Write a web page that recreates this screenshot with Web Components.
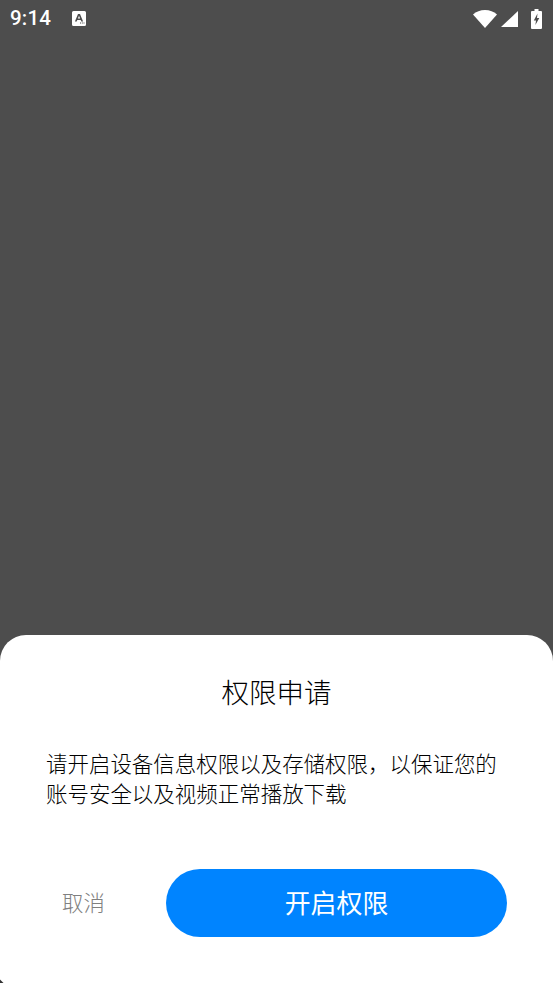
<!DOCTYPE html>
<html lang="zh-CN">
<head>
<meta charset="utf-8">
<title>权限申请</title>
<style>
html,body{margin:0;padding:0;height:100%;background:#4d4d4d}
body{font-family:"Roboto","Noto Sans CJK SC",sans-serif}
</style>
</head>
<body>
<perm-screen>
  <status-bar slot="status" time="9:14"></status-bar>
  <perm-sheet slot="sheet" heading="权限申请" primary="开启权限" secondary="取消">请开启设备信息权限以及存储权限，以保证您的<br>账号安全以及视频正常播放下载</perm-sheet>
</perm-screen>
<script>
class PermScreen extends HTMLElement{
  constructor(){super();this.attachShadow({mode:'open'}).innerHTML=`
  <style>
  :host{display:flex;flex-direction:column;width:553px;height:983px;background:#4d4d4d;overflow:hidden;position:relative}
  .gap{flex:1}
  .corner{position:absolute;left:0;bottom:0;display:block}
  </style>
  <slot name="status"></slot>
  <div class="gap"></div>
  <slot name="sheet"></slot>
  <svg class="corner" width="4" height="4" viewBox="0 0 4 4"><path d="M0 0.5 L3.5 4 H0Z" fill="#333"/></svg>`;}
}
class StatusBar extends HTMLElement{
  constructor(){super();this.attachShadow({mode:'open'}).innerHTML=`
  <style>
  :host{display:flex;align-items:center;height:37px;padding:0 11px 0 10px;color:#fff;box-sizing:border-box;flex:none}
  .time{font:500 20.500px/37px Roboto,sans-serif;letter-spacing:.2px;margin-right:21px}
  .left{display:flex;align-items:center;flex:1}
  .right{display:flex;align-items:center;gap:4px}
  svg{display:block}
  </style>
  <div class="left"><span class="time"></span>
    <svg width="14" height="15" viewBox="0 0 14 15"><path fill="#fff" fill-rule="evenodd" d="M1.500 0H12.500A1.500 1.500 0 0 1 14 1.500V13.500A1.500 1.500 0 0 1 12.500 15H1.500A1.500 1.500 0 0 1 0 13.500V1.500A1.500 1.500 0 0 1 1.500 0ZM6 3 2.900 10.500H4.700L5.300 9H8.700L9.300 10.500H11.100L8 3ZM5.900 7.500 7 4.700 8.100 7.500Z"/><path fill="#4d4d4d" d="M8 11.500h1v1H8zM9.800 11.500h1v1h-1zM11.500 11.500h1v1h-1z"/></svg>
  </div>
  <div class="right">
    <svg width="24" height="18" viewBox="0 0 24 18"><path fill="#fff" d="M12 0C7.300 0 3.200 1.700 0 4.400L12 18 24 4.400C20.800 1.700 16.700 0 12 0Z"/></svg>
    <svg width="17" height="16" viewBox="0 0 17 16"><path fill="#fff" d="M17 0V16H0Z"/></svg>
    <svg style="margin-left:9px" width="11" height="20" viewBox="0 0 11 20"><path fill="#fff" fill-rule="evenodd" d="M3.500 0H7.500V2H10A1 1 0 0 1 11 3V19A1 1 0 0 1 10 20H1A1 1 0 0 1 0 19V3A1 1 0 0 1 1 2H3.500Z"/><path fill="#4d4d4d" d="M6.500 4.500 2.800 11.500H5L4.400 16 8.300 9H6Z"/></svg>
  </div>`;
  }
  connectedCallback(){this.shadowRoot.querySelector('.time').textContent=this.getAttribute('time');}
}
class PermSheet extends HTMLElement{
  constructor(){super();this.attachShadow({mode:'open'}).innerHTML=`
  <style>
  :host{display:block;height:348px;box-sizing:border-box;background:#fff;border-radius:26px 26px 0 0;padding:36px 46px 46px 46px;flex:none;font-family:"Noto Sans CJK SC",sans-serif}
  h1{margin:0;font-weight:300;font-size:27.500px;line-height:40px;text-align:center;color:#000}
  .body{margin-top:37px;font-size:21.480px;line-height:30px;font-weight:300;color:#000;white-space:nowrap;height:60px}
  .actions{display:flex;align-items:center;margin-top:61px;margin-left:16px}
  .cancel{font-size:21.400px;line-height:30px;font-weight:300;color:#808080;width:104px;padding-bottom:2px}
  .ok{flex:none;box-sizing:border-box;width:341px;height:68px;padding-bottom:3px;border-radius:34px;background:#0084ff;color:#fff;font-size:25.900px;font-weight:400;display:flex;align-items:center;justify-content:center}
  </style>
  <h1></h1>
  <div class="body"><slot></slot></div>
  <div class="actions"><span class="cancel"></span><span class="ok"></span></div>`;
  }
  connectedCallback(){const s=this.shadowRoot;
    s.querySelector('h1').textContent=this.getAttribute('heading');
    s.querySelector('.ok').textContent=this.getAttribute('primary');
    s.querySelector('.cancel').textContent=this.getAttribute('secondary');}
}
customElements.define('perm-screen',PermScreen);
customElements.define('status-bar',StatusBar);
customElements.define('perm-sheet',PermSheet);
</script>
</body>
</html>
